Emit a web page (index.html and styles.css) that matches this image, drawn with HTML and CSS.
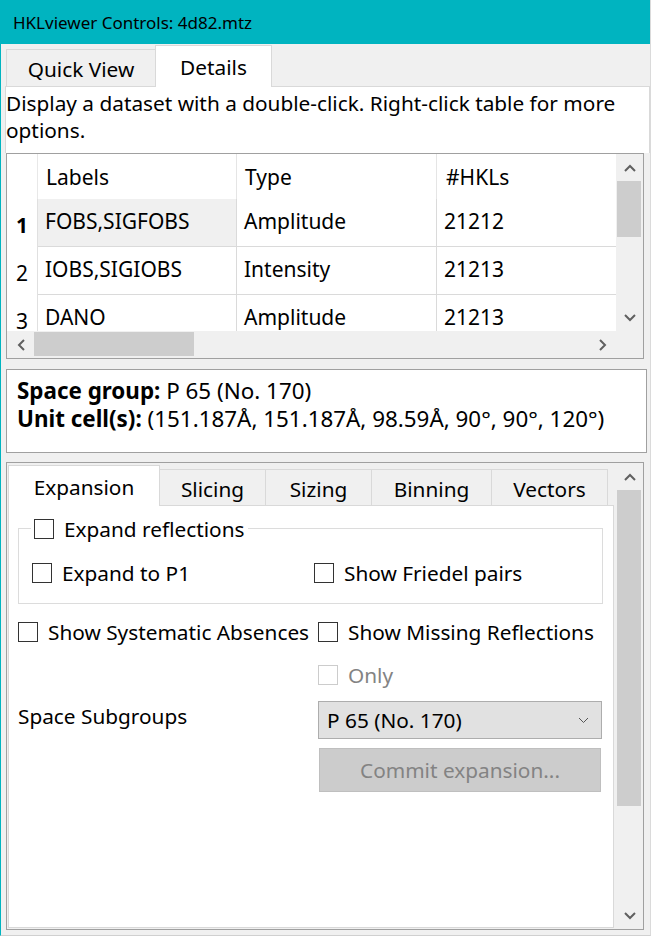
FILE: index.html
```html
<!DOCTYPE html>
<html>
<head>
<meta charset="utf-8">
<title>HKLviewer Controls</title>
<link rel="stylesheet" href="styles.css">
</head>
<body>
<div class="window">
  <div class="titlebar">HKLviewer Controls: 4d82.mtz</div>

  <div class="ttabbar">
    <div class="ttab">Quick View</div>
    <div class="ttab active">Details</div>
  </div>

  <div class="hint">Display a dataset with a double-click. Right-click table for more<br>options.</div>

  <div class="table">
    <div class="table-main">
      <div class="grid">
        <div class="corner"></div>
        <div class="hh">Labels</div>
        <div class="hh">Type</div>
        <div class="hh last">#HKLs</div>

        <div class="vh bold">1</div>
        <div class="cell current">FOBS,SIGFOBS</div>
        <div class="cell">Amplitude</div>
        <div class="cell last">21212</div>

        <div class="vh">2</div>
        <div class="cell">IOBS,SIGIOBS</div>
        <div class="cell">Intensity</div>
        <div class="cell last">21213</div>

        <div class="vh">3</div>
        <div class="cell">DANO</div>
        <div class="cell">Amplitude</div>
        <div class="cell last">21213</div>
      </div>
      <div class="vscroll">
        <div class="sb-btn"><svg width="12" height="8" viewBox="0 0 12 8"><path d="M1 7 L6 2 L11 7" fill="none" stroke="#606060" stroke-width="2"/></svg></div>
        <div class="sb-track"><div class="thumb-v small"></div></div>
        <div class="sb-btn"><svg width="12" height="8" viewBox="0 0 12 8"><path d="M1 1 L6 6 L11 1" fill="none" stroke="#606060" stroke-width="2"/></svg></div>
      </div>
    </div>
    <div class="table-bottom">
      <div class="hscroll">
        <div class="sb-btn"><svg width="8" height="12" viewBox="0 0 8 12"><path d="M7 1 L2 6 L7 11" fill="none" stroke="#606060" stroke-width="2"/></svg></div>
        <div class="sb-htrack"><div class="thumb-h"></div></div>
        <div class="sb-btn"><svg width="8" height="12" viewBox="0 0 8 12"><path d="M1 1 L6 6 L1 11" fill="none" stroke="#606060" stroke-width="2"/></svg></div>
      </div>
      <div class="sb-corner"></div>
    </div>
  </div>

  <div class="info">
    <div><b>Space group:</b> P 65 (No. 170)</div>
    <div><b>Unit cell(s):</b> (151.187Å, 151.187Å, 98.59Å, 90°, 90°, 120°)</div>
  </div>

  <div class="scrollarea">
    <div class="viewport">
      <div class="itabbar">
        <div class="itab active w-exp">Expansion</div>
        <div class="itab w-sli">Slicing</div>
        <div class="itab w-siz">Sizing</div>
        <div class="itab w-bin">Binning</div>
        <div class="itab w-vec">Vectors</div>
      </div>
      <div class="pane">
        <div class="groupbox">
          <div class="gb-title check"><span class="cb"></span><span>Expand reflections</span></div>
          <div class="gb-row">
            <div class="check"><span class="cb"></span><span>Expand to P1</span></div>
            <div class="check"><span class="cb"></span><span>Show Friedel pairs</span></div>
          </div>
        </div>

        <div class="frow row-a">
          <div class="lcol"><div class="check"><span class="cb"></span><span>Show Systematic Absences</span></div></div>
          <div class="rcol"><div class="check"><span class="cb"></span><span>Show Missing Reflections</span></div></div>
        </div>
        <div class="frow row-b">
          <div class="lcol"></div>
          <div class="rcol"><div class="check disabled"><span class="cb"></span><span>Only</span></div></div>
        </div>
        <div class="frow row-c">
          <div class="lcol label">Space Subgroups</div>
          <div class="rcol">
            <div class="combo"><span>P 65 (No. 170)</span><svg width="11" height="7" viewBox="0 0 11 7"><path d="M1 1 L5.5 5.5 L10 1" fill="none" stroke="#555" stroke-width="1"/></svg></div>
          </div>
        </div>
        <div class="frow row-d">
          <div class="lcol"></div>
          <div class="rcol"><div class="button">Commit expansion...</div></div>
        </div>
      </div>
    </div>
    <div class="vscroll big">
      <div class="sb-btn"><svg width="12" height="8" viewBox="0 0 12 8"><path d="M1 7 L6 2 L11 7" fill="none" stroke="#606060" stroke-width="2"/></svg></div>
      <div class="sb-track"><div class="thumb-v tall"></div></div>
      <div class="sb-btn"><svg width="12" height="8" viewBox="0 0 12 8"><path d="M1 1 L6 6 L11 1" fill="none" stroke="#606060" stroke-width="2"/></svg></div>
    </div>
  </div>
</div>
</body>
</html>
```

FILE: styles.css
```css
* { box-sizing: border-box; }
html, body { margin: 0; padding: 0; }
body {
  background: #f0f0f0;
  font-family: "Noto Sans", "Open Sans", sans-serif;
  font-size: 20.8px;
  color: #000;
}
.window {
  width: 651px;
  height: 936px;
  border-left: 1px solid #00b4c0;
  border-right: 1px solid #dadada;
  border-bottom: 1px solid #d0d0d0;
  background: #f0f0f0;
  overflow: hidden;
}
.titlebar {
  height: 44px;
  background: #00b4c0;
  font-size: 17px;
  line-height: 45px;
  padding-left: 12px;
  white-space: nowrap;
}

/* top tabs */
.ttabbar {
  height: 42px;
  display: flex;
  align-items: flex-end;
  padding-left: 5px;
}
.ttab {
  height: 37px;
  width: 150px;
  border: 1px solid #d9d9d9;
  border-bottom: none;
  background: #f0f0f0;
  display: flex;
  align-items: center;
  justify-content: center;
  padding-top: 1px;
  white-space: nowrap;
}
.ttab.active {
  width: 117px;
  height: 42px;
  margin-left: -1px;
  margin-bottom: -1px;
  background: #fff;
  position: relative;
  z-index: 1;
  padding-top: 0;
}

.hint {
  margin-left: 4px;
  width: 645px;
  height: 67px;
  border: 1px solid #d9d9d9;
  border-bottom: none;
  background: #fff;
  padding: 3px 0 0 0;
  line-height: 27px;
  white-space: nowrap;
}

/* table */
.table {
  margin-left: 5px;
  width: 638px;
  height: 206px;
  border: 1px solid #a0a0a0;
  background: #fff;
  display: flex;
  flex-direction: column;
  font-size: 21px;
}
.table-main {
  height: 177px;
  display: flex;
}
.grid {
  width: 609px;
  height: 177px;
  overflow: hidden;
  display: grid;
  grid-template-columns: 31px 199px 200px 179px;
  grid-template-rows: 45px 48px 48px 48px;
  white-space: nowrap;
}
.corner { border-right: 1px solid #e8e8e8; }
.hh {
  display: flex;
  align-items: center;
  padding-left: 8px;
  border-right: 1px solid #e5e5e5;
}
.hh.last { border-right: none; padding-left: 9px; }
.vh {
  display: flex;
  align-items: center;
  justify-content: center;
  border-right: 1px solid #e0e0e0;
  padding-top: 3px;
}
.vh.bold { font-weight: bold; }
.cell {
  display: flex;
  align-items: center;
  padding-left: 7px;
  padding-bottom: 3px;
  border-right: 1px solid #dadada;
  border-bottom: 1px solid #dadada;
}
.cell.last { border-right: none; }
.cell.current { background: #f0f0f0; }

.vscroll {
  width: 27px;
  background: #f0f0f0;
  display: flex;
  flex-direction: column;
}
.sb-btn {
  width: 27px;
  height: 27px;
  flex: none;
  display: flex;
  align-items: center;
  justify-content: center;
}
.sb-track { flex: 1; }
.thumb-v {
  margin-left: 1px;
  width: 24px;
  background: #cdcdcd;
}
.thumb-v.small { height: 56px; }
.thumb-v.tall { height: 316px; }

.table-bottom {
  height: 27px;
  display: flex;
}
.hscroll {
  width: 609px;
  height: 27px;
  background: #f0f0f0;
  display: flex;
}
.sb-htrack { flex: 1; padding-top: 1px; }
.thumb-h {
  width: 160px;
  height: 24px;
  background: #cdcdcd;
}
.sb-corner {
  width: 27px;
  height: 27px;
  background: #f0f0f0;
}

/* info box */
.info {
  margin: 10px 0 0 5px;
  width: 641px;
  height: 84px;
  border: 1px solid #a0a0a0;
  background: #fff;
  padding: 7px 0 0 10px;
  font-size: 22.4px;
  line-height: 28px;
  white-space: nowrap;
}

/* lower scroll area */
.scrollarea {
  margin: 9px 0 0 5px;
  width: 638px;
  height: 468px;
  border: 1px solid #a0a0a0;
  display: flex;
}
.viewport {
  width: 609px;
  display: flex;
  flex-direction: column;
  padding-top: 2px;
  background: #f0f0f0;
}
.itabbar {
  height: 40px;
  display: flex;
  align-items: flex-end;
  padding-left: 1px;
  flex: none;
}
.itab {
  height: 36px;
  margin-left: -1px;
  border: 1px solid #d9d9d9;
  border-bottom: none;
  background: #f0f0f0;
  display: flex;
  align-items: center;
  justify-content: center;
  padding-top: 2px;
  white-space: nowrap;
}
.itab.active {
  height: 41px;
  margin-left: 0;
  margin-bottom: -1px;
  background: #fff;
  position: relative;
  z-index: 1;
  padding-top: 1px;
}
.w-exp { width: 152px; }
.w-sli { width: 107px; }
.w-siz { width: 107px; }
.w-bin { width: 121px; }
.w-vec { width: 117px; }

.pane {
  margin-left: 1px;
  width: 606px;
  flex: 1;
  margin-bottom: 1px;
  border: 1px solid #d9d9d9;
  background: #fff;
}

.check {
  display: flex;
  align-items: center;
  gap: 10px;
  height: 20px;
  line-height: 20px;
  white-space: nowrap;
}
.cb {
  width: 20px;
  height: 20px;
  flex: none;
  border: 1px solid #333;
  background: #fff;
}
.check.disabled { color: #838383; }
.check.disabled .cb { border-color: #cccccc; }

.groupbox {
  margin: 22px 0 0 9px;
  width: 585px;
  height: 76px;
  border: 1px solid #dcdcdc;
}
.gb-title {
  width: max-content;
  margin: -10px 0 0 12px;
  padding: 0 4px 0 3px;
  background: #fff;
}
.gb-row {
  display: grid;
  grid-template-columns: 282px auto;
  margin-top: 24px;
  padding-left: 13px;
}

.frow {
  display: flex;
  margin-left: 9px;
}
.lcol { width: 300px; }
.rcol { width: 284px; }
.row-a { margin-top: 18px; }
.row-b { margin-top: 23px; height: 20px; }
.row-c { margin-top: 16px; align-items: center; }
.row-d { margin-top: 9px; }
.label { white-space: nowrap; padding-bottom: 8px; }

.combo {
  height: 38px;
  border: 1px solid #adadad;
  background: #e1e1e1;
  display: flex;
  align-items: center;
  justify-content: space-between;
  padding: 0 12px 0 8px;
  white-space: nowrap;
}
.button {
  margin-left: 1px;
  width: 282px;
  height: 44px;
  border: 1px solid #bfbfbf;
  background: #cccccc;
  color: #838383;
  display: flex;
  align-items: center;
  justify-content: center;
  white-space: nowrap;
}
```
